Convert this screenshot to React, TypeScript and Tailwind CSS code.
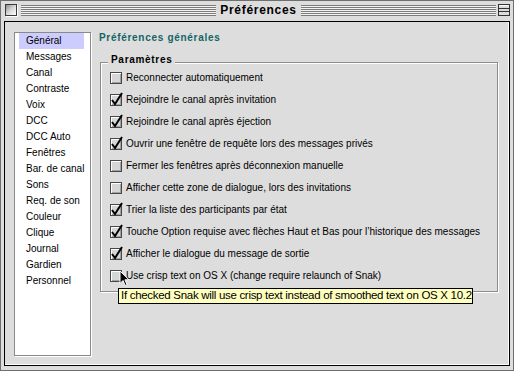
import React from "react";

const items = [
  "Général",
  "Messages",
  "Canal",
  "Contraste",
  "Voix",
  "DCC",
  "DCC Auto",
  "Fenêtres",
  "Bar. de canal",
  "Sons",
  "Req. de son",
  "Couleur",
  "Clique",
  "Journal",
  "Gardien",
  "Personnel",
];

const options: [string, boolean][] = [
  ["Reconnecter automatiquement", false],
  ["Rejoindre le canal après invitation", true],
  ["Rejoindre le canal après éjection", true],
  ["Ouvrir une fenêtre de requête lors des messages privés", true],
  ["Fermer les fenêtres après déconnexion manuelle", false],
  ["Afficher cette zone de dialogue, lors des invitations", false],
  ["Trier la liste des participants par état", true],
  ["Touche Option requise avec flèches Haut et Bas pour l’historique des messages", true],
  ["Afficher le dialogue du message de sortie", true],
  ["Use crisp text on OS X (change require relaunch of Snak)", false],
];

function Check({ checked }: { checked: boolean }) {
  return (
    <div className="relative w-[12px] h-[12px] shrink-0 border border-[#484848] bg-[#d6d6d6] shadow-[inset_1px_1px_0_#ffffff,inset_-1px_-1px_0_#a2a2a2]">
      {checked && (
        <svg
          className="absolute left-[-1px] top-[-2px] overflow-visible"
          width="13"
          height="13"
          viewBox="0 0 13 13"
        >
          <polyline points="2,7 5,11 12,0" fill="none" stroke="#000" strokeWidth="2" />
        </svg>
      )}
    </div>
  );
}

export default function App() {
  return (
    <div className="relative w-[514px] h-[371px] border border-[#6f6f6f] bg-[#dddddd] flex flex-col font-['Liberation_Sans',Arial,sans-serif] text-black overflow-hidden">
      {/* Title bar */}
      <div className="h-[20px] shrink-0 flex items-start pt-[3px] pl-[4px] pr-[3px]">
        <div className="w-[12px] h-[12px] shrink-0 border border-[#3a3a3a] bg-[linear-gradient(135deg,#8c8c8c_0%,#d8d8d8_50%,#ffffff_100%)] shadow-[1px_1px_0_#ffffff]" />
        <div className="flex-1 h-[11px] mt-[1px] ml-[4px] bg-[repeating-linear-gradient(to_bottom,#7b7b7b_0px,#7b7b7b_1px,#f4f4f4_1px,#f4f4f4_2px)]" />
        <div className="px-[4px] text-[12px] leading-[12px] font-bold tracking-[0.7px] whitespace-nowrap">
          Préférences
        </div>
        <div className="flex-1 h-[11px] mt-[1px] mr-[2px] bg-[repeating-linear-gradient(to_bottom,#7b7b7b_0px,#7b7b7b_1px,#f4f4f4_1px,#f4f4f4_2px)]" />
        <svg width="12" height="12" viewBox="0 0 12 12" className="shrink-0">
          <rect x="0.5" y="0.5" width="11" height="11" fill="#dcdcdc" stroke="#333" />
          <line x1="1" y1="1.5" x2="11" y2="1.5" stroke="#fff" />
          <line x1="0.5" y1="4.5" x2="11.5" y2="4.5" stroke="#333" />
          <line x1="0.5" y1="7.5" x2="11.5" y2="7.5" stroke="#333" />
        </svg>
      </div>

      {/* Content */}
      <div className="mx-[3px] mb-[4px] h-[345px] border border-black flex pl-[9px] pt-[10px] shadow-[inset_-1px_-1px_0_#ffffff]">
        {/* Sidebar list */}
        <div className="w-[77px] h-[324px] shrink-0 border border-[#8a8a8a] bg-white shadow-[1px_1px_0_#ffffff] pl-[4px] flex flex-col">
          {items.map((it, i) => (
            <div
              key={it}
              className={
                "h-[16px] w-[65px] pl-[7px] text-[10px] leading-[16px] whitespace-nowrap " +
                (i === 0 ? "bg-[#ccccff]" : "")
              }
            >
              {it}
            </div>
          ))}
        </div>

        {/* Right column */}
        <div className="ml-[8px] flex flex-col">
          <div className="text-[10px] leading-[12px] font-bold tracking-[0.7px] text-[#146464] whitespace-nowrap">
            Préférences générales
          </div>
          <div className="relative mt-[18px] ml-[1px] w-[398px] h-[230px] border border-[#8c8c8c] shadow-[inset_1px_1px_0_#ffffff,1px_1px_0_#ffffff] pt-[4px] pl-[9px] flex flex-col">
            <div className="absolute left-[7px] top-[-9px] px-[3px] bg-[#dddddd] text-[10px] leading-[12px] font-bold tracking-[0.7px]">
              Paramètres
            </div>
            {options.map(([label, checked]) => (
              <div key={label} className="h-[22px] flex items-center">
                <Check checked={checked} />
                <span className="ml-[4px] text-[10px] leading-[22px] whitespace-nowrap">{label}</span>
              </div>
            ))}
          </div>
        </div>
      </div>

      {/* Tooltip */}
      <div className="absolute left-[117px] top-[287px] w-[355px] h-[16px] border border-black bg-[#ffffc0] pl-[2px] pb-[2px] text-[11.5px] leading-[12px] tracking-[-0.3px] whitespace-nowrap">
        If checked Snak will use crisp text instead of smoothed text on OS X 10.2
      </div>

      {/* Mouse cursor */}
      <svg
        className="absolute left-[118px] top-[269px]"
        width="12"
        height="17"
        viewBox="0 0 12 17"
      >
        <polygon
          points="1,1 1,13.5 4,10.5 6.2,15.5 8,14.7 5.9,9.8 10,9.8"
          fill="#000"
          stroke="#fff"
          strokeWidth="1"
          strokeLinejoin="miter"
        />
      </svg>
    </div>
  );
}
